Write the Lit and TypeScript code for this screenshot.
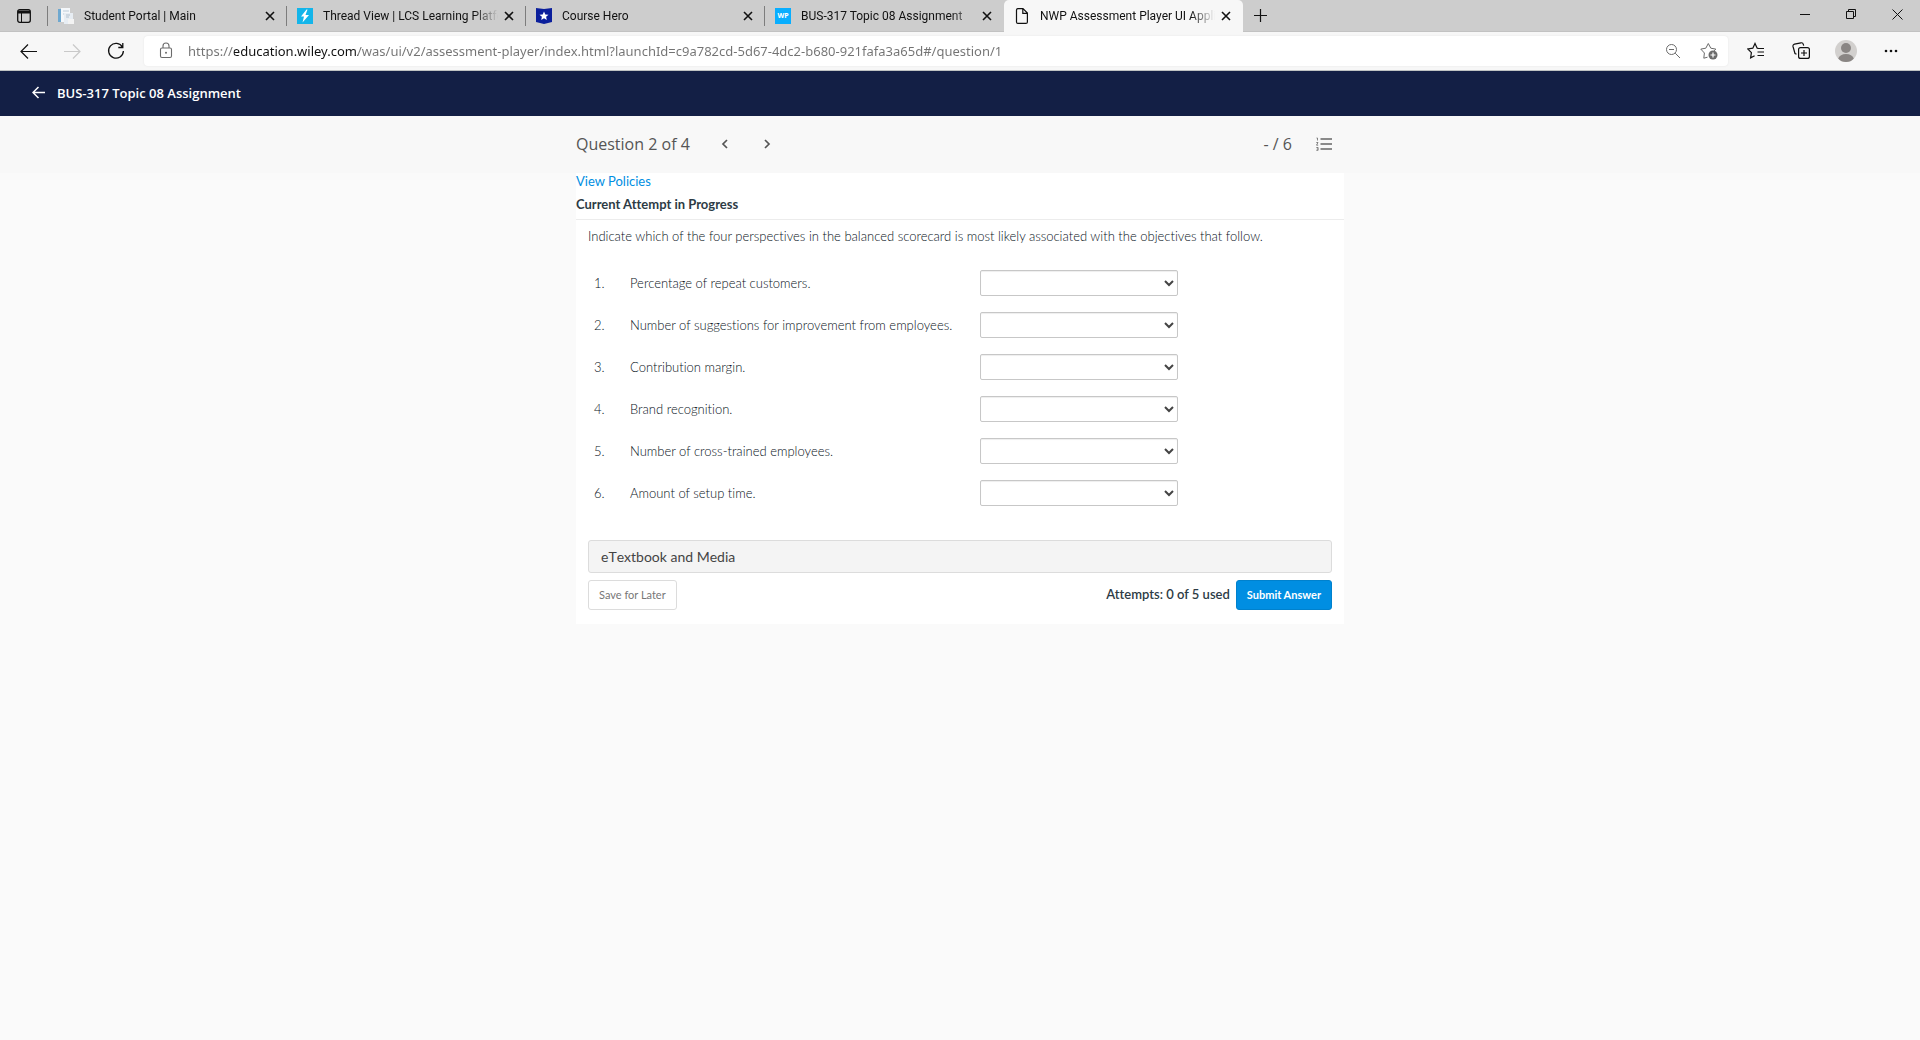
import { LitElement, html, css, svg } from "lit";
import { customElement, property } from "lit/decorators.js";
import { classMap } from "lit/directives/class-map.js";

const line = (d: string, size = 16, width = 1) => html`<svg
  width=${size} height=${size} viewBox="0 0 ${size} ${size}" fill="none"
  stroke="currentColor" stroke-width=${width} aria-hidden="true">${svg`<path d=${d} />`}</svg>`;

const portalIcon = html`<svg width="16" height="16" viewBox="0 0 16 16" aria-hidden="true">
  <rect x="0" y="1" width="4" height="13" fill="#6fa8cf" />
  <rect x="3" y="0" width="9" height="14" fill="#f4f7fa" />
  <path d="M5 3h6M5 6h4" stroke="#bccbd8" />
  <rect x="6" y="5" width="9" height="11" fill="#e7edf3" />
  <path d="M8 7h4M8 9h3" stroke="#b3c1ce" />
  <rect x="10" y="11" width="6" height="5" fill="#f3f3f3" />
</svg>`;

const threadIcon = html`<svg width="16" height="16" viewBox="0 0 16 16" aria-hidden="true">
  <rect width="16" height="16" fill="#13b5ea" />
  <path d="M9.500 1.500L4 8.500h3L5.500 14.500 12 7H8.500L10.500 1.500Z" fill="#fff" />
</svg>`;

const heroIcon = html`<svg width="16" height="16" viewBox="0 0 16 16" aria-hidden="true">
  <path d="M0 0l8 1 8-1v14l-8 2-8-2Z" fill="#0b1f9c" />
  <path d="M8 3.500l1.300 2.900 3.200.3-2.400 2.100.7 3.100L8 10.300l-2.800 1.600.7-3.100-2.400-2.100 3.200-.3Z" fill="#fff" />
</svg>`;

const pageIcon = html`<svg width="16" height="16" viewBox="0 0 16 16" fill="none" stroke="#111" stroke-width="1.200" aria-hidden="true">
  <path d="M4 .6h5l4.400 4.400v8.900a1.500 1.500 0 0 1-1.500 1.500H4a1.500 1.500 0 0 1-1.500-1.500V2.100A1.500 1.500 0 0 1 4 .6ZM8.800 .8v4.500h4.500" />
</svg>`;

const wpIcon = html`<span class="wp">WP</span>`;

const tabs = [
  { title: "Student Portal | Main", icon: portalIcon },
  { title: "Thread View | LCS Learning Platfo", icon: threadIcon },
  { title: "Course Hero", icon: heroIcon },
  { title: "BUS-317 Topic 08 Assignment", icon: wpIcon },
  { title: "NWP Assessment Player UI Appli", icon: pageIcon, active: true },
];

const objectives = [
  "Percentage of repeat customers.",
  "Number of suggestions for improvement from employees.",
  "Contribution margin.",
  "Brand recognition.",
  "Number of cross-trained employees.",
  "Amount of setup time.",
];

const perspectives = ["Financial", "Customer", "Internal Process", "Learning and Growth"];

const reset = css`
  * { box-sizing: border-box; }
  :host { display: block; }
  button { font: inherit; color: inherit; background: none; border: 0; padding: 0; margin: 0; display: flex; align-items: center; justify-content: center; }
  svg { display: block; flex: none; }
`;

@customElement("browser-tabs")
export class BrowserTabs extends LitElement {
  static styles = [reset, css`
    .bar { display: flex; height: 32px; background: #cdcdcd; border-bottom: 1px solid #c2c2c2; font: 12px/16px Roboto, sans-serif; color: #111; }
    .menu { width: 48px; flex: none; }
    .tabs { display: flex; flex: 0 1 1195px; min-width: 0; }
    .tab { flex: 1 1 0; min-width: 0; height: 32px; display: flex; align-items: center; gap: 4px; padding: 0 10px; position: relative; }
    .tab::before { content: ""; position: absolute; left: -1px; top: 6px; height: 20px; width: 1px; background: #7d7d7d; }
    .active { background: #f7f7f7; border-radius: 5px 5px 0 0; }
    .active::before { display: none; }
    .pick { flex: 1; min-width: 0; gap: 10px; justify-content: flex-start; height: 32px; }
    .title { flex: 1; min-width: 0; overflow: hidden; white-space: nowrap; text-align: left; mask-image: linear-gradient(to right, #000 calc(100% - 24px), transparent); }
    .wp { width: 16px; height: 16px; flex: none; background: #08aeff; color: #fff; font: bold 7px/16px "Open Sans", sans-serif; text-align: center; }
    .close { width: 14px; height: 16px; flex: none; }
    .new { width: 34px; }
    .window { display: flex; margin-left: auto; }
    .window button { width: 46px; height: 28px; }
  `];

  render() {
    return html`<div class="bar">
      <button class="menu" aria-label="Tab actions">
        <svg width="14" height="14" viewBox="0 0 14 14" fill="none" stroke="#111" aria-hidden="true">
          <rect x=".7" y=".7" width="12.600" height="12.600" rx="2" stroke-width="1.300" />
          <path d="M1 3h12" stroke-width="3" /><path d="M4.500 4v9" />
        </svg>
      </button>
      <nav class="tabs" aria-label="Tabs">
        ${tabs.map((t) => html`<div class=${classMap({ tab: true, active: !!t.active })}>
          <button class="pick">${t.icon}<span class="title">${t.title}</span></button>
          <button class="close" aria-label="Close tab">${line("M1 1l8 8M9 1L1 9", 10, 1.6)}</button>
        </div>`)}
      </nav>
      <button class="new" aria-label="New tab">${line("M7.500 1v13M1 7.500h13", 15, 1.2)}</button>
      <div class="window">
        <button aria-label="Minimize">${line("M0 5.500h10", 11)}</button>
        <button aria-label="Restore">${line("M.5 2.500h7v7h-7zM2.500 2.500v-2h7v7h-2", 11)}</button>
        <button aria-label="Close">${line("M.5.5l10 10M10.500.5l-10 10", 11)}</button>
      </div>
    </div>`;
  }
}

@customElement("address-toolbar")
export class AddressToolbar extends LitElement {
  @property() url = "https://education.wiley.com/was/ui/v2/assessment-player/index.html?launchId=c9a782cd-5d67-4dc2-b680-921fafa3a65d#/question/1";

  static styles = [reset, css`
    .bar { display: flex; align-items: center; height: 39px; background: #f7f7f7; border-bottom: 1px solid #bfc3c3; color: #111; }
    .nav { width: 44px; height: 32px; }
    .nav.back { margin-left: 6px; }
    .nav.off { color: #c9c9c9; }
    .field { flex: 1; min-width: 0; height: 30px; display: flex; align-items: center; margin-left: 6px; padding: 0 8px 0 14px; gap: 14px; background: #fff; border-radius: 4px; box-shadow: 0 0 2px #e2e2e2; color: #6b6b6b; }
    .url { flex: 1; min-width: 0; height: 24px; padding: 0; border: 0; outline: 0; font: 13px/24px "Noto Sans", sans-serif; color: #737373; -webkit-text-fill-color: transparent; background: linear-gradient(to right, #737373 46px, #111 46px, #111 170px, #737373 170px); -webkit-background-clip: text; background-clip: text; }
    .tools { display: flex; margin: 0 7px 0 5px; }
    .tools button { width: 45px; height: 32px; }
    .inner { width: 22px; height: 24px; }
  `];

  render() {
    return html`<div class="bar">
      <button class="nav back" aria-label="Back">${line("M17 8.500H1M8 1.500l-7 7 7 7", 17, 1.2)}</button>
      <button class="nav off" aria-label="Forward">${line("M0 8.500h16M9 1.500l7 7-7 7", 17, 1.2)}</button>
      <button class="nav" aria-label="Refresh">${line("M15.500 5.200A7.400 7.400 0 1 0 16.400 9M15.800 1v4.500h-4.500", 18, 1.3)}</button>
      <div class="field">
        <svg width="16" height="18" viewBox="0 0 16 18" fill="none" stroke="currentColor" aria-hidden="true">
          <rect x="2.500" y="6" width="11" height="9.500" rx="1.500" stroke-width="1.100" />
          <path d="M5 6V4a3 3 0 0 1 6 0v2" stroke-width="1.100" /><circle cx="8" cy="10.800" r="1" fill="currentColor" stroke="none" />
        </svg>
        <input class="url" type="text" aria-label="Address" spellcheck="false" .value=${this.url} />
        <button class="inner" aria-label="Zoom out">${line("M10.500 5.500a5 5 0 1 1-10 0a5 5 0 0 1 10 0ZM9.200 9.200L14 14M3 5.500h5", 15)}</button>
        <button class="inner" aria-label="Add to favorites">
          <svg width="18" height="18" viewBox="0 0 18 18" fill="none" stroke="currentColor" aria-hidden="true">
            <path d="M7.500 15.200l-3.700 1 .6-5.200L.8 7.100l5-.9L8.300 1.500l2.500 4.700 5 .9-1.600 1.800" />
            <circle cx="13" cy="13" r="4.500" fill="currentColor" stroke="none" />
            <path d="M13 10.500v5M10.500 13h5" stroke="#fff" stroke-width="1.200" />
          </svg>
        </button>
      </div>
      <div class="tools">
        <button aria-label="Favorites">${line("M11.500 6.500L10.200 6.200 8 1.500 5.800 6.200.8 7l3.600 3.600-.8 5.200 4-2.100M10.500 6.500H17M10.500 10H17M10.500 13.500H17", 18, 1.2)}</button>
        <button aria-label="Collections">
          <svg width="18" height="18" viewBox="0 0 18 18" fill="none" stroke="currentColor" stroke-width="1.200" aria-hidden="true">
            <rect x="6.600" y="5.600" width="10.800" height="10.800" rx="2" />
            <path d="M12 8v6M9 11h6M4.500 12.300L3 11.500 1 4.500A2 2 0 0 1 2.500 2.100L9 .8a2 2 0 0 1 2.300 1.500l.4 1.400" />
          </svg>
        </button>
        <button aria-label="Profile">
          <svg width="22" height="22" viewBox="0 0 22 22" aria-hidden="true">
            <circle cx="11" cy="11" r="11" fill="#d2d0ce" /><circle cx="11" cy="8" r="5" fill="#8a8684" />
            <path d="M3.200 18.500Q5 14 11 14t7.800 4.500Q16 22 11 22t-7.800-3.500Z" fill="#8a8684" />
          </svg>
        </button>
        <button aria-label="Settings and more">
          <svg width="14" height="4" viewBox="0 0 14 4" fill="currentColor" aria-hidden="true"><circle cx="2" cy="2" r="1.300" /><circle cx="7" cy="2" r="1.300" /><circle cx="12" cy="2" r="1.300" /></svg>
        </button>
      </div>
    </div>`;
  }
}

@customElement("question-card")
export class QuestionCard extends LitElement {
  static styles = [reset, css`
    .card { background: #fff; padding-bottom: 14px; font: 13px/20px Lato, sans-serif; font-variant-ligatures: none; color: #2d3b45; }
    .top { border-bottom: 1px solid #ececec; padding-bottom: 5px; }
    .policies { display: block; width: max-content; line-height: 16px; color: #008ee2; text-decoration: none; }
    .attempt { margin: 5px 0 0; font-size: 13px; line-height: 20px; font-weight: 700; }
    .body { padding: 0 12px; }
    .prompt { margin: 0; padding: 6px 0 16px; font-weight: 300; color: #08121a; }
    .rows { border-collapse: collapse; font-weight: 300; color: #08121a; }
    .rows td { height: 42px; padding: 0; }
    .rows .num { width: 42px; padding-left: 6px; }
    .rows .text { width: 350px; }
    .choice { display: block; width: 198px; height: 26px; border: 1px solid #c7c7c7; border-radius: 2px; background: #fff; color: #444; font: 13px Lato, sans-serif; box-shadow: inset 0 1px 1px #eee; }
    .media { width: 100%; height: 33px; margin-top: 26px; padding: 0 12px; justify-content: flex-start; background: #f4f4f4; border: 1px solid #dcdcdc; border-radius: 3px; font-size: 14px; color: #444; font-kerning: none; }
    .foot { display: flex; align-items: center; margin-top: 7px; gap: 6px; }
    .count { margin-left: auto; font-weight: 600; padding-bottom: 2px; }
    .btn { height: 30px; padding: 0 10px; border: 1px solid #dcdcdc; border-radius: 3px; font-size: 11px; color: #777; }
    .submit { background: #008ee2; border-color: #0081cd; color: #fff; font-weight: 700; }
  `];

  render() {
    return html`<main class="card">
      <div class="top">
        <a class="policies" href="#policies">View Policies</a>
        <h2 class="attempt">Current Attempt in Progress</h2>
      </div>
      <div class="body">
        <p class="prompt">Indicate which of the four perspectives in the balanced scorecard is most likely associated with the objectives that follow.</p>
        <table class="rows">
          <tbody>
            ${objectives.map((text, i) => html`<tr>
              <td class="num">${i + 1}.</td>
              <td class="text"><label for="objective-${i}">${text}</label></td>
              <td><select class="choice" id="objective-${i}">
                <option value="" selected></option>
                ${perspectives.map((p) => html`<option>${p}</option>`)}
              </select></td>
            </tr>`)}
          </tbody>
        </table>
        <button class="media">eTextbook and Media</button>
        <div class="foot">
          <button class="btn">Save for Later</button>
          <span class="count">Attempts: 0 of 5 used</span>
          <button class="btn submit">Submit Answer</button>
        </div>
      </div>
    </main>`;
  }
}

@customElement("app-root")
export class AppRoot extends LitElement {
  static styles = [reset, css`
    :host { min-height: 100vh; background: #fafafa; }
    .course { display: flex; align-items: center; height: 45px; padding: 0 32px 2px; gap: 12px; background: #131f45; color: #fff; font: 600 13px/16px "Open Sans", sans-serif; }
    .course h1 { font: inherit; margin: 0; }
    .strip { background: #f8f8f8; }
    .wrap { width: 100%; max-width: 768px; margin: 0 auto; }
    .pager { display: flex; align-items: center; height: 57px; padding-bottom: 2px; font: 16px/24px "Open Sans", sans-serif; color: #555; }
    .steps { display: flex; margin-left: 14px; }
    .steps button { width: 42px; height: 32px; }
    .score { margin-left: auto; }
    .list { width: 16px; height: 24px; margin: 0 12px 0 24px; }
  `];

  render() {
    return html`
      <browser-tabs></browser-tabs>
      <address-toolbar></address-toolbar>
      <header class="course">
        <button aria-label="Back to course">${line("M13 6.500H1M6.500 1l-5.500 5.500 5.500 5.500", 13, 1.5)}</button>
        <h1>BUS-317 Topic 08 Assignment</h1>
      </header>
      <div class="strip">
        <div class="wrap pager">
          <span>Question 2 of 4</span>
          <div class="steps">
            <button aria-label="Previous question">${line("M7 1L3 5l4 4", 10, 1.7)}</button>
            <button aria-label="Next question">${line("M3 1l4 4-4 4", 10, 1.7)}</button>
          </div>
          <span class="score">- / 6</span>
          <button class="list" aria-label="Question list">
            <svg width="16" height="14" viewBox="0 0 16 14" fill="none" stroke="#666" aria-hidden="true">
              <path d="M4.500 2H16M4.500 7H16M4.500 12H16" stroke-width="1.400" />
              <path d="M.5 1H1.500V3.500M.3 5.500h1.700L.5 8.200h1.700M.3 10.500h1.800v2.800H.3M.8 12h1.200" stroke-width=".8" />
            </svg>
          </button>
        </div>
      </div>
      <div class="wrap"><question-card></question-card></div>
    `;
  }
}
